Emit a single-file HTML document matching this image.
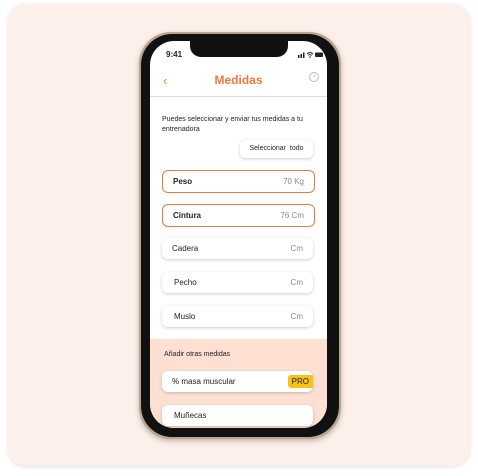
<html><head><style>
body{margin:0;width:478px;height:476px;background:#fff;font-family:"Liberation Sans",sans-serif;position:relative;overflow:hidden}
.card{position:absolute;left:8px;top:4px;width:462px;height:462px;border-radius:18px;background:#fdf0ea;box-shadow:0 1px 4px rgba(0,0,0,.12)}
.phone{position:absolute;left:139px;top:32px;width:202px;height:407px;border-radius:32px;background:#b9a48c;box-shadow:0 2px 6px rgba(0,0,0,.25)}
.bez{position:absolute;left:141px;top:34px;width:198px;height:403px;border-radius:31px;background:#111}
.scr{position:absolute;left:150px;top:41px;width:177px;height:387px;border-radius:24px;background:#fff;overflow:hidden}
.notch{position:absolute;left:40px;top:0;width:98px;height:16px;background:#111;border-radius:0 0 11px 11px}
.t{position:absolute;font-size:8px;color:#222}
.row{position:absolute;left:12px;width:151px;height:21px;background:#fff;border-radius:6px;box-shadow:0 1px 3px rgba(0,0,0,.2);font-size:8px;color:#222}
.row span{position:absolute;top:5.5px}
.row .r{right:10px;color:#888}
.sel{border:1.3px solid #f07a3a;box-shadow:none}
</style></head><body>
<div class="card"></div>
<div class="phone"></div><div class="bez"></div>
<div class="scr">
<div class="notch"></div>
<div class="t" style="left:16px;top:9px;font-weight:bold">9:41</div>
<svg style="position:absolute;left:148px;top:10px" width="26" height="7" viewBox="0 0 26 7"><rect x="0" y="4" width="1.5" height="3" fill="#222"/><rect x="2.5" y="3" width="1.5" height="4" fill="#222"/><rect x="5" y="1.5" width="1.5" height="5.5" fill="#222"/><path d="M9 3 Q12 0 15 3 M10.2 4.4 Q12 2.8 13.8 4.4" stroke="#222" stroke-width="1" fill="none"/><circle cx="12" cy="6" r=".8" fill="#222"/><rect x="17" y="1.5" width="8" height="4.5" rx="1" fill="#222"/></svg>
<div style="position:absolute;left:0;top:55px;width:177px;height:1px;background:#ddd"></div>
<div class="t" style="left:13px;top:32px;color:#f07a3a;font-size:13px">‹</div>
<div class="t" style="left:0;width:177px;text-align:center;top:32px;color:#f07a3a;font-size:12px;font-weight:bold">Medidas</div>
<div style="position:absolute;left:159px;top:31px;width:8px;height:8px;border:1px solid #bbb;border-radius:50%;font-size:6px;color:#bbb;text-align:center;line-height:8px">×</div>
<div class="t" style="left:12px;top:74px;font-size:7px;line-height:9.5px">Puedes seleccionar y enviar tus medidas a tu<br>entrenadora</div>
<div style="position:absolute;left:90px;top:99px;width:73px;height:18px;border-radius:5px;background:#fff;box-shadow:0 1px 3px rgba(0,0,0,.2);font-size:7px;text-align:center;line-height:18px;color:#222">Seleccionar &nbsp;todo</div>
<div class="row sel" style="top:129px"><span style="left:10px;font-weight:bold">Peso</span><span class="r">70 Kg</span></div>
<div class="row sel" style="top:163px"><span style="left:10px;font-weight:bold">Cintura</span><span class="r">76 Cm</span></div>
<div class="row" style="top:197px"><span style="left:10px">Cadera</span><span class="r">Cm</span></div>
<div class="row" style="top:231px"><span style="left:12px">Pecho</span><span class="r">Cm</span></div>
<div class="row" style="top:265px"><span style="left:12px">Muslo</span><span class="r">Cm</span></div>
<div style="position:absolute;left:0;top:298px;width:177px;height:100px;background:#fde0d2"></div>
<div class="t" style="left:14px;top:310px;font-size:7px">Añadir otras medidas</div>
<div class="row" style="top:330px"><span style="left:10px">% masa muscular</span><span style="right:0;top:4px;background:#f6c419;padding:2px 4px;border-radius:3px 0 0 3px">PRO</span></div>
<div class="row" style="top:364px"><span style="left:12px">Muñecas</span></div>
</div>
</body></html>
